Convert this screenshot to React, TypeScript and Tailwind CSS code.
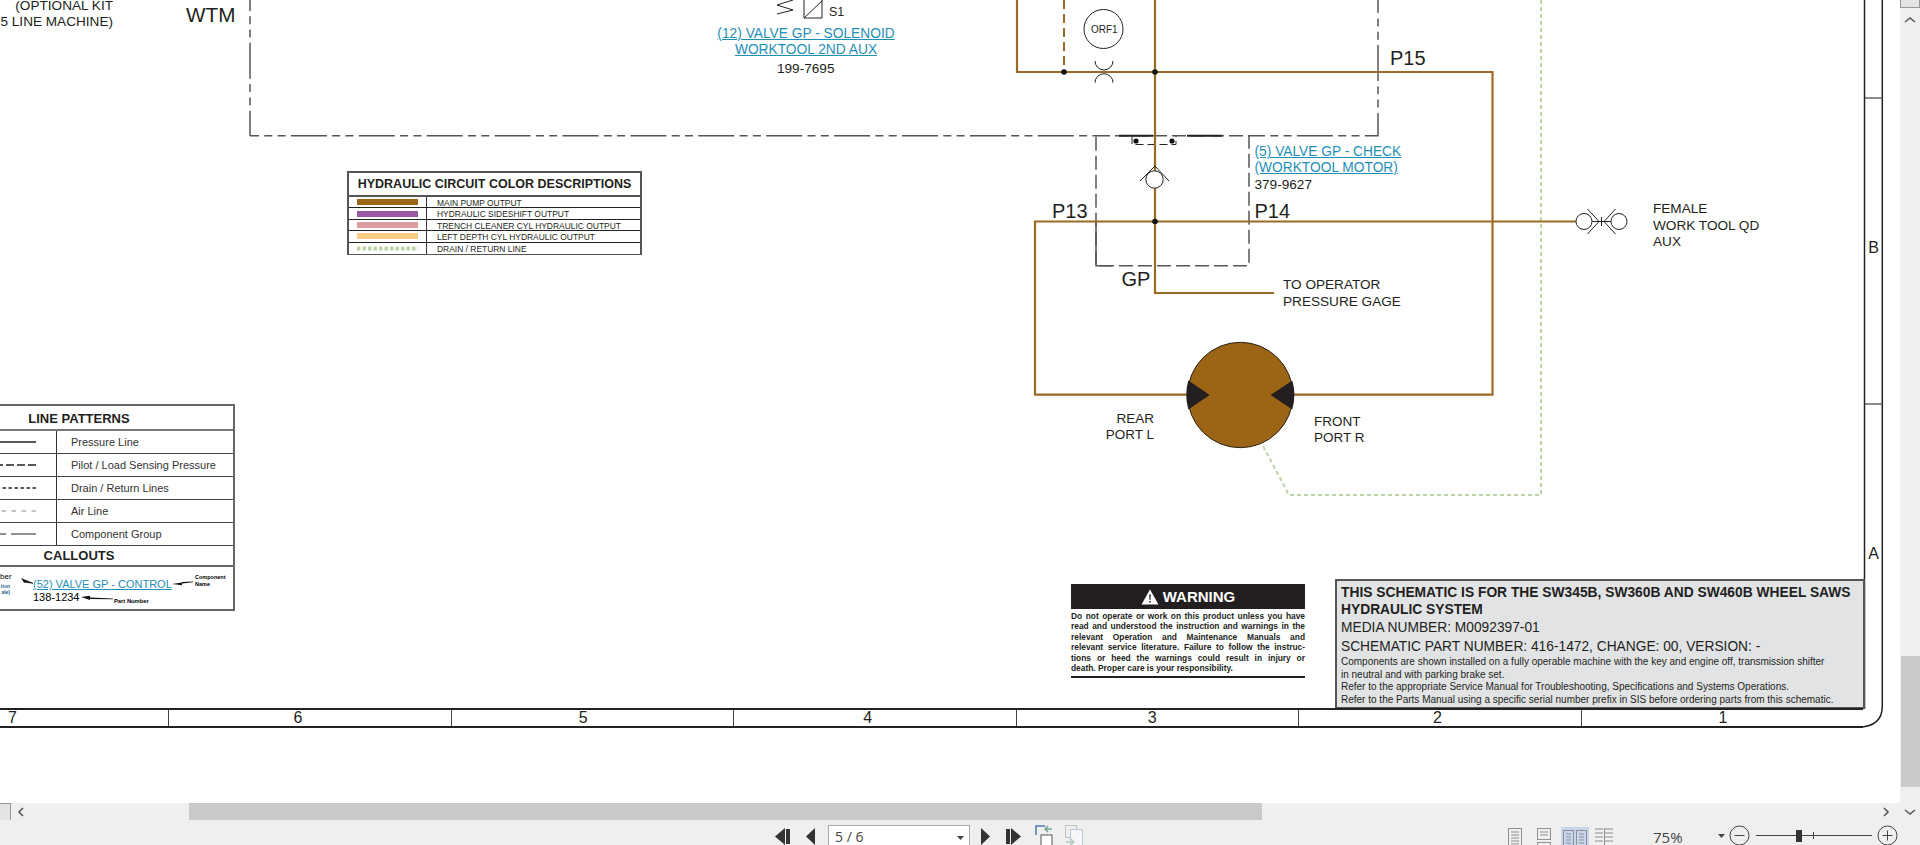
const COLORS = [
  { label: "MAIN PUMP OUTPUT", swatch: "bg-[#9c6415]" },
  { label: "HYDRAULIC SIDESHIFT OUTPUT", swatch: "bg-[#9b59a4]" },
  { label: "TRENCH CLEANER CYL HYDRAULIC OUTPUT", swatch: "bg-[#dd9c9e]" },
  { label: "LEFT DEPTH CYL HYDRAULIC OUTPUT", swatch: "bg-[#fdcd85]" },
];

const PATTERNS = [
  { label: "Pressure Line", stroke: "#222", width: 1.5, dash: "" },
  { label: "Pilot / Load Sensing Pressure", stroke: "#222", width: 1.5, dash: "8 3" },
  { label: "Drain / Return Lines", stroke: "#222", width: 1.5, dash: "3.5 2.5" },
  { label: "Air Line", stroke: "#888", width: 1, dash: "4.5 5.5" },
  { label: "Component Group", stroke: "#222", width: 1, dash: "25 5 30 5" },
];

const WARNING = [
  "Do not operate or work on this product unless you have",
  "read and understood the instruction and warnings in the",
  "relevant Operation and Maintenance Manuals and",
  "relevant service literature. Failure to follow the instruc-",
  "tions or heed the warnings could result in injury or",
];

// the numbers drift a little inside their cells on the sheet
const ZONES = [
  { label: "6", pad: "pl-[124px]" },
  { label: "5", pad: "pl-[127px]" },
  { label: "4", pad: "pl-[129px]" },
  { label: "3", pad: "pl-[131px]" },
  { label: "2", pad: "pl-[134px]" },
  { label: "1", pad: "pl-[137px]" },
];

const BROWN = "#9c6a25";
const GREEN = "#bcd3a4";
const GRAY = "#555";

// the schematic lines, in page coordinates
function Schematic() {
  return (
    <svg className="absolute left-0 top-0" width="1900" height="803" fill="none">
      {/* drain line */}
      <path
        d="M1541 0V495H1289L1262 444"
        stroke={GREEN}
        strokeWidth="2"
        strokeDasharray="4 3"
      />

      {/* component group outline */}
      <path
        d="M250 135.7V0"
        stroke={GRAY}
        strokeWidth="1.5"
        strokeDasharray="36 5.3 8 5.3 8 5.3"
        strokeDashoffset="11"
      />
      <path
        d="M250 135.7H1096"
        stroke={GRAY}
        strokeWidth="1.5"
        strokeDasharray="36 5.3 8 5.3 8 5.3"
        strokeDashoffset="27"
      />
      <path d="M1249 135.7H1378V0" stroke={GRAY} strokeWidth="1.5" strokeDasharray="36 5.3 8 5.3 8 5.3" strokeDashoffset="20" />
      <rect x="1096" y="135.7" width="153" height="130" stroke={GRAY} strokeWidth="1.5" strokeDasharray="14 5" />
      <path d="M1096 222V265.7H1112" stroke={GRAY} strokeWidth="1.5" />
      <path d="M1119 135.7H1153M1187 135.7H1222" stroke="#222" strokeWidth="2" />

      {/* small bracket on top of the check valve */}
      <path d="M1132 136V144.5H1176V136" stroke="#222" strokeWidth="1" strokeDasharray="8 4" />
      <circle cx="1136" cy="141" r="2.6" fill="#111" />
      <circle cx="1172" cy="141" r="2.6" fill="#111" />

      {/* pump lines */}
      <path d="M1064 0V72" stroke={BROWN} strokeWidth="2" strokeDasharray="9 5" />
      <path d="M1017 0V72H1492.5V394.7H1291" stroke={BROWN} strokeWidth="2.2" />
      <path d="M1155 0V171M1155 188V293H1274" stroke={BROWN} strokeWidth="2.2" />
      <path d="M1576 221.5H1035V394.7H1190" stroke={BROWN} strokeWidth="2.2" />

      {/* junctions */}
      <circle cx="1064" cy="72" r="2.8" fill="#111" />
      <circle cx="1155" cy="72" r="2.8" fill="#111" />
      <circle cx="1155" cy="221.5" r="2.8" fill="#111" />

      {/* ORF1 */}
      <circle cx="1103.5" cy="29" r="19.5" stroke="#222" strokeWidth="1" />
      <path d="M1095 61A9 9 0 0 0 1113 61M1095 82.7A9 9 0 0 1 1113 82.7" stroke="#222" strokeWidth="1" />

      {/* check valve */}
      <circle cx="1154.5" cy="179.5" r="8.7" fill="#fff" stroke="#222" strokeWidth="1" />
      <path d="M1140 181L1155 166L1169 181" stroke="#222" strokeWidth="1" />

      {/* quick disconnect */}
      <circle cx="1584" cy="221.5" r="8" stroke="#222" strokeWidth="1" />
      <path d="M1587.5 209L1599 221.5L1587.5 234" stroke="#222" strokeWidth="1" />
      <path d="M1592 221.5H1611M1601.5 217V226" stroke="#222" strokeWidth="1" />
      <circle cx="1619" cy="221.5" r="8" stroke="#222" strokeWidth="1" />
      <path d="M1615.5 209L1604 221.5L1615.5 234" stroke="#222" strokeWidth="1" />

      {/* motor */}
      <circle cx="1240.3" cy="395" r="52.7" fill="#9c6415" stroke="#2a2118" strokeWidth="1" />
      <path d="M1188.3 380.5L1209.7 395L1188.3 409.5A52.7 52.7 0 0 1 1188.3 380.5Z" fill="#231f20" />
      <path d="M1292.3 380.5L1270.6 395L1292.3 409.5A52.7 52.7 0 0 0 1292.3 380.5Z" fill="#231f20" />

      {/* solenoid */}
      <path d="M793 0L777 5L793 10L777 14" stroke="#222" strokeWidth="1" />
      <path d="M804 0V18H822V0M804 18L822 1" stroke="#222" strokeWidth="1" />

      {/* sheet frame */}
      <path d="M1864.5 0V709" stroke="#222" strokeWidth="1.5" />
      <path d="M1882.3 0V706C1882.3 720 1874 727 1858 727H1840" stroke="#222" strokeWidth="1.5" />
      <path d="M1865 98H1882M1865 404H1882" stroke="#666" strokeWidth="1.5" />

      {/* callout arrows */}
      <path d="M33 583.3L24 582.2L21.7 578.6L24.5 579.8Z" fill="#111" stroke="#111" strokeWidth="0.6" />
      <path d="M172 584L182 582.5V582L193 581.5V582.3L182 583.6V585.2Z" fill="#111" />
      <path d="M81 597L90 595.8V597.5L113 598.5V599.3L90 599V600Z" fill="#111" />
    </svg>
  );
}

function ColorTable() {
  return (
    <div className="absolute left-[347px] top-[171px] w-[295px] border-2 border-b-[1.5px] border-[#555] bg-white text-[#231f20]">
      <div className="flex h-[24px] items-center justify-center border-b-2 border-[#555] pt-[1px] text-[12.5px] font-bold leading-none">
        HYDRAULIC CIRCUIT COLOR DESCRIPTIONS
      </div>
      {COLORS.map((c) => (
        <div key={c.label} className="flex h-[11.4px] items-center border-b border-[#222]">
          <div className="flex h-full w-[78px] shrink-0 items-center border-r border-[#333] pl-[8px]">
            <div className={`h-[6px] w-[61px] ${c.swatch}`} />
          </div>
          <span className="pl-[10px] pt-[1.5px] text-[8.45px] leading-none">{c.label}</span>
        </div>
      ))}
      <div className="flex h-[11.4px] items-center">
        <div className="flex h-full w-[78px] shrink-0 items-center border-r border-[#333] pl-[8px]">
          <svg width="61" height="5">
            <line x1="0" y1="2.5" x2="61" y2="2.5" stroke={GREEN} strokeWidth="4" strokeDasharray="3.5 2" />
          </svg>
        </div>
        <span className="pl-[10px] pt-[1.5px] text-[8.45px] leading-none">DRAIN / RETURN LINE</span>
      </div>
    </div>
  );
}

function LegendTable() {
  return (
    <div className="absolute left-[-77px] top-[404px] w-[312px] border-2 border-[#666] bg-white text-[#231f20]">
      <div className="flex h-[25px] items-center justify-center border-b-2 border-[#777] pt-[1px] text-[13px] font-bold leading-none">
        LINE PATTERNS
      </div>
      {PATTERNS.map((p) => (
        <div key={p.label} className="flex h-[23px] items-center border-b border-[#444] last:border-b-2">
          <div className="flex h-full w-[132px] shrink-0 items-center justify-end border-r border-[#333] pr-[20px]">
            <svg width="100" height="4">
              <line x1="100" y1="2" x2="0" y2="2" stroke={p.stroke} strokeWidth={p.width} strokeDasharray={p.dash} />
            </svg>
          </div>
          <span className="pl-[14px] text-[11px] leading-none text-[#333]">{p.label}</span>
        </div>
      ))}
      <div className="flex h-[21px] items-center justify-center border-b-2 border-[#666] text-[13px] font-bold leading-none">
        CALLOUTS
      </div>
      <div className="h-[42px]" />
    </div>
  );
}

function CalloutText() {
  return (
    <>
      <div className="absolute left-[33px] top-[577px] text-[11px] leading-[14px] text-[#1e8fb8] underline">
        (52) VALVE GP - CONTROL
      </div>
      <div className="absolute left-[33px] top-[591px] text-[11px] leading-[13px]">138-1234</div>
      <div className="absolute left-[114px] top-[598px] text-[5.8px] font-bold leading-[6px]">Part Number</div>
      <div className="absolute left-[195px] top-[574px] text-[5.5px] font-bold leading-[7px]">
        <div>Component</div>
        <div>Name</div>
      </div>
      <div className="absolute left-0 top-[573px] w-[11px] text-right text-[8px] leading-[8px]">ber</div>
      <div className="absolute left-0 top-[583px] w-[10px] text-right text-[5px] font-bold leading-[6px] text-[#1e5f8a]">
        <div>tion</div>
        <div>ale)</div>
      </div>
    </>
  );
}

function WarningBlock() {
  return (
    <div className="absolute left-[1071px] top-[584px] w-[234px] text-[#231f20]">
      <div className="flex h-[25px] items-center justify-center gap-[4px] bg-[#231f20] text-[15px] font-bold leading-none text-white">
        <svg width="18" height="16" viewBox="0 0 18 16">
          <path d="M9 0.5L17.5 15.5H0.5Z" fill="#fff" />
          <path d="M8.2 5.5H9.8L9.5 11H8.5ZM8.2 12H9.8V13.6H8.2Z" fill="#231f20" />
        </svg>
        WARNING
      </div>
      <div className="mt-[2px] border-b-2 border-[#231f20] pb-[3px] text-[8.4px] font-bold leading-[10.4px]">
        {WARNING.map((w) => (
          <div key={w} className="text-justify [text-align-last:justify]">
            {w}
          </div>
        ))}
        <div>death. Proper care is your responsibility.</div>
      </div>
    </div>
  );
}

function TitleBlock() {
  return (
    <div className="absolute left-[1335px] top-[579px] h-[130px] w-[530px] border-2 border-[#555] bg-[#e2e3e5] pl-[4px] pt-[2.5px] text-[#231f20]">
      <div className="text-[13.8px] font-bold leading-[17px]">
        THIS SCHEMATIC IS FOR THE SW345B, SW360B AND SW460B WHEEL SAWS
      </div>
      <div className="text-[13.8px] font-bold leading-[17px]">HYDRAULIC SYSTEM</div>
      <div className="mt-[1px] text-[13.75px] leading-[17px]">MEDIA NUMBER: M0092397-01</div>
      <div className="mt-[2.5px] text-[13.75px] leading-[17px]">SCHEMATIC PART NUMBER: 416-1472, CHANGE: 00, VERSION: -</div>
      <div className="pt-[1px] text-[10px] leading-[12.6px]">
        <div>Components are shown installed on a fully operable machine with the key and engine off, transmission shifter</div>
        <div>in neutral and with parking brake set.</div>
        <div>Refer to the appropriate Service Manual for Troubleshooting, Specifications and Systems Operations.</div>
        <div>Refer to the Parts Manual using a specific serial number prefix in SIS before ordering parts from this schematic.</div>
      </div>
    </div>
  );
}

function ZoneRuler() {
  return (
    <div className="absolute left-0 top-[708px] flex h-[20px] w-[1863px] border-y-2 border-[#222] text-[16px] leading-none text-[#231f20]">
      <div className="flex w-[169px] items-center pl-[8px]">7</div>
      {ZONES.map((z) => (
        <div key={z.label} className={`flex w-[283px] items-center border-l border-[#444] ${z.pad}`}>
          {z.label}
        </div>
      ))}
    </div>
  );
}

function Labels() {
  return (
    <div className="text-[#231f20]">
      <div className="absolute left-0 top-[-2px] w-[113px] text-right text-[13.6px] leading-[16px]">
        <div>(OPTIONAL KIT</div>
        <div className="whitespace-nowrap">5 LINE MACHINE)</div>
      </div>
      <div className="absolute left-[186px] top-[5px] text-[20.7px] leading-none">WTM</div>

      <div className="absolute left-[829px] top-[6px] text-[12.5px] leading-none">S1</div>
      <div className="absolute left-[706px] top-[26px] w-[200px] text-center text-[13.75px] leading-[16px] text-[#1e8fb8]">
        <div className="underline">(12) VALVE GP - SOLENOID</div>
        <div className="underline">WORKTOOL 2ND AUX</div>
      </div>
      <div className="absolute left-[777px] top-[61px] text-[13.6px] leading-[16px]">199-7695</div>

      <div className="absolute left-[1091px] top-[25px] w-[25px] text-center text-[10px] leading-[10px]">ORF1</div>

      <div className="absolute left-[1390px] top-[48px] text-[20px] leading-none">P15</div>
      <div className="absolute left-[1052px] top-[201px] text-[20px] leading-none">P13</div>
      <div className="absolute left-[1254.5px] top-[201px] text-[20px] leading-none">P14</div>
      <div className="absolute left-[1121.5px] top-[269px] text-[20px] leading-none">GP</div>

      <div className="absolute left-[1254.5px] top-[144px] text-[13.75px] leading-[16px] text-[#1e8fb8]">
        <div className="underline">(5) VALVE GP - CHECK</div>
        <div className="underline">(WORKTOOL MOTOR)</div>
      </div>
      <div className="absolute left-[1254.5px] top-[177px] text-[13.6px] leading-[16px]">379-9627</div>

      <div className="absolute left-[1283px] top-[276px] text-[13.6px] leading-[17px]">
        <div>TO OPERATOR</div>
        <div>PRESSURE GAGE</div>
      </div>
      <div className="absolute left-[1653px] top-[201px] text-[13.6px] leading-[16.5px]">
        <div>FEMALE</div>
        <div>WORK TOOL QD</div>
        <div>AUX</div>
      </div>
      <div className="absolute left-[1054px] top-[411px] w-[100px] text-right text-[13.5px] leading-[16px]">
        <div>REAR</div>
        <div>PORT L</div>
      </div>
      <div className="absolute left-[1314px] top-[414px] text-[13.5px] leading-[16px]">
        <div>FRONT</div>
        <div>PORT R</div>
      </div>

      <div className="absolute left-[1866px] top-[240px] w-[15px] text-center text-[16px] leading-none">B</div>
      <div className="absolute left-[1866px] top-[546px] w-[15px] text-center text-[16px] leading-none">A</div>
    </div>
  );
}

function VerticalScrollbar() {
  return (
    <div className="flex w-[20px] shrink-0 flex-col items-center bg-[#efefef]">
      <div className="h-[8px] w-[20px] border border-t-0 border-[#999] bg-[#e4e4e4]" />
      <svg className="mt-[8px]" width="14" height="8" fill="none">
        <path d="M2 6L7 2L12 6" stroke="#555" strokeWidth="1.5" />
      </svg>
      <div className="mt-[632px] h-[131px] w-[19px] bg-[#cacaca]" />
      <svg className="mt-[21px]" width="14" height="8" fill="none">
        <path d="M2 2L7 6L12 2" stroke="#555" strokeWidth="1.5" />
      </svg>
    </div>
  );
}

function HorizontalScrollbar() {
  return (
    <div className="flex h-[17px] shrink-0 items-center bg-[#efefef]">
      <div className="h-full w-[11px] border border-l-0 border-b-0 border-[#999] bg-[#e4e4e4]" />
      <svg className="ml-[5px]" width="10" height="14" fill="none">
        <path d="M7 3L3 7L7 11" stroke="#555" strokeWidth="1.6" />
      </svg>
      <div className="ml-[163px] h-full w-[1073px] bg-[#c9c9c9]" />
      <svg className="ml-[619px]" width="10" height="14" fill="none">
        <path d="M3 3L7 7L3 11" stroke="#555" strokeWidth="1.6" />
      </svg>
    </div>
  );
}

function PageIcon({ width = 14 }: { width?: number }) {
  return (
    <svg width={width} height="20" fill="none" stroke="#8f8f8f">
      <rect x="0.5" y="0.5" width={width - 1} height="19" />
      {[4, 7, 10, 13, 16].map((y) => (
        <path key={y} d={`M3 ${y}H${width - 3}`} />
      ))}
    </svg>
  );
}

function Toolbar() {
  return (
    <div className="flex h-[25px] shrink-0 items-start overflow-hidden bg-[#efefef] font-['Open_Sans',sans-serif] text-[#444]">
      <svg className="ml-[775px] mt-[8px]" width="15" height="17" fill="#333">
        <path d="M10 0V17L0 8.5ZM11 1H15V16H11Z" />
      </svg>
      <svg className="ml-[16px] mt-[8px]" width="9" height="17" fill="#333">
        <path d="M9 0V17L0 8.5Z" />
      </svg>
      <div className="ml-[13px] mt-[5px] flex h-[30px] w-[142px] shrink-0 items-start justify-between border border-[#aaa] bg-white pl-[6px] pr-[5px] pt-[1px] text-[14px] leading-[20px]">
        <span>5 / 6</span>
        <svg className="mt-[9px]" width="7" height="4" fill="#444">
          <path d="M0 0H7L3.5 4Z" />
        </svg>
      </div>
      <svg className="ml-[11px] mt-[8px]" width="9" height="17" fill="#333">
        <path d="M0 0V17L9 8.5Z" />
      </svg>
      <svg className="ml-[16px] mt-[8px]" width="15" height="17" fill="#333">
        <path d="M0 1H4V16H0ZM5 0V17L15 8.5Z" />
      </svg>
      <svg className="ml-[14px] mt-[5px]" width="18" height="24" fill="none">
        <path d="M1 10V1H10" stroke="#4a78b5" strokeWidth="1.5" />
        <path d="M17 4H10M13 1L10 4L13 7" stroke="#6fa78f" strokeWidth="1.5" />
        <rect x="6" y="10" width="11" height="14" fill="#fff" stroke="#555" />
      </svg>
      <svg className="ml-[12px] mt-[5px]" width="18" height="24" fill="none" opacity="0.45">
        <rect x="0.5" y="0.5" width="11" height="12" stroke="#888" />
        <rect x="5.5" y="4.5" width="12" height="18" fill="#fff" stroke="#7a9cc6" />
        <path d="M1 17H9M6 14L9 17L6 20" stroke="#6fa78f" strokeWidth="1.5" />
      </svg>

      <div className="ml-[425px] mt-[8px] w-[14px] shrink-0">
        <PageIcon />
      </div>
      <div className="ml-[15px] mt-[8px] flex w-[14px] shrink-0 flex-col gap-[2px]">
        <svg width="14" height="12" fill="none" stroke="#8f8f8f">
          <rect x="0.5" y="0.5" width="13" height="11" />
          <path d="M3 4H11M3 7H11" />
        </svg>
        <svg width="14" height="12" fill="none" stroke="#8f8f8f">
          <rect x="0.5" y="0.5" width="13" height="11" />
        </svg>
      </div>
      <div className="ml-[10px] mt-[7px] flex h-[18px] w-[28px] shrink-0 justify-center gap-[2px] bg-[#c5d6ee] pt-[3px]">
        <PageIcon width={11} />
        <PageIcon width={11} />
      </div>
      <div className="ml-[6px] mt-[8px] flex w-[18px] shrink-0 gap-[1px]">
        <svg width="8" height="20" fill="none" stroke="#8f8f8f">
          <path d="M0 1H8M0 5H8M0 9H8M0 13H8" />
        </svg>
        <svg width="9" height="20" fill="none" stroke="#8f8f8f">
          <path d="M0.5 0V20M0 1H9M0 5H9M0 9H9M0 13H9" />
        </svg>
      </div>

      <span className="ml-[40px] mt-[7px] w-[30px] shrink-0 whitespace-nowrap text-[15px] leading-[20px]">75%</span>
      <svg className="ml-[35px] mt-[14px]" width="7" height="4" fill="#444">
        <path d="M0 0H7L3.5 4Z" />
      </svg>
      <svg className="ml-[4px] mt-[5px]" width="21" height="21" fill="none" stroke="#444">
        <circle cx="10.5" cy="10.5" r="9.5" />
        <path d="M5.5 10.5H15.5" />
      </svg>
      <svg className="ml-[6px] mt-[9px]" width="116" height="14" fill="none" stroke="#444">
        <path d="M0 6.5H116" />
        <path d="M57.5 3V10" />
        <rect x="40" y="1" width="6" height="12" fill="#333" stroke="none" />
      </svg>
      <svg className="ml-[5px] mt-[5px]" width="21" height="21" fill="none" stroke="#444">
        <circle cx="10.5" cy="10.5" r="9.5" />
        <path d="M5.5 10.5H15.5M10.5 5.5V15.5" />
      </svg>
    </div>
  );
}

export default function App() {
  return (
    <div className="flex h-screen w-full flex-col overflow-hidden bg-white font-['Liberation_Sans',Arial,sans-serif]">
      <div className="flex min-h-0 flex-1">
        <div className="flex min-w-0 flex-1 flex-col">
          <div className="relative min-h-0 flex-1 overflow-hidden bg-white">
            <ColorTable />
            <LegendTable />
            <Schematic />
            <CalloutText />
            <WarningBlock />
            <TitleBlock />
            <ZoneRuler />
            <Labels />
          </div>
          <HorizontalScrollbar />
        </div>
        <VerticalScrollbar />
      </div>
      <Toolbar />
    </div>
  );
}
